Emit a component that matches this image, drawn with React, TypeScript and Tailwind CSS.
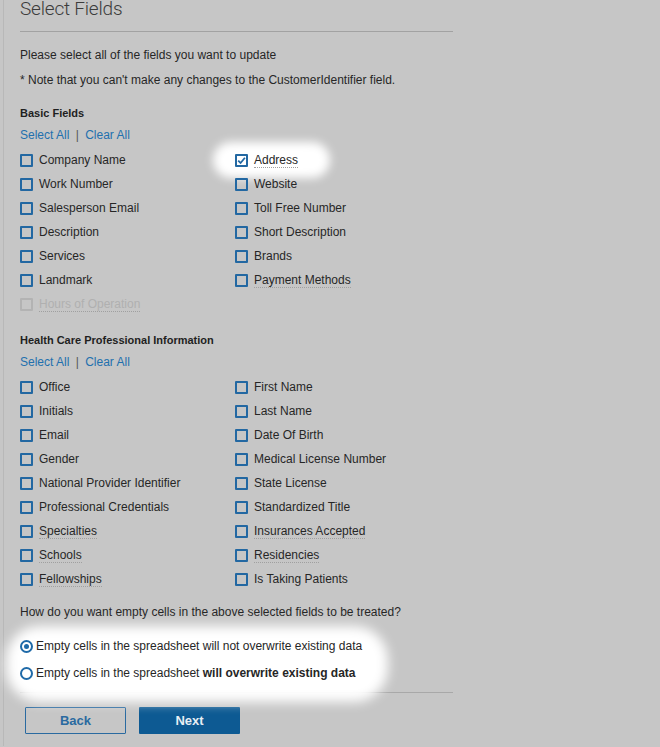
import React from 'react';

type Field = { label: string; checked?: boolean; disabled?: boolean; dotted?: boolean; glow?: boolean };

const basicFields: Field[] = [
  { label: 'Company Name' },
  { label: 'Address', checked: true, dotted: true, glow: true },
  { label: 'Work Number' },
  { label: 'Website' },
  { label: 'Salesperson Email' },
  { label: 'Toll Free Number' },
  { label: 'Description' },
  { label: 'Short Description' },
  { label: 'Services' },
  { label: 'Brands' },
  { label: 'Landmark' },
  { label: 'Payment Methods', dotted: true },
  { label: 'Hours of Operation', disabled: true, dotted: true },
];

const hcpFields: Field[] = [
  { label: 'Office' },
  { label: 'First Name' },
  { label: 'Initials' },
  { label: 'Last Name' },
  { label: 'Email' },
  { label: 'Date Of Birth' },
  { label: 'Gender' },
  { label: 'Medical License Number' },
  { label: 'National Provider Identifier' },
  { label: 'State License' },
  { label: 'Professional Credentials' },
  { label: 'Standardized Title' },
  { label: 'Specialties', dotted: true },
  { label: 'Insurances Accepted', dotted: true },
  { label: 'Schools', dotted: true },
  { label: 'Residencies', dotted: true },
  { label: 'Fellowships', dotted: true },
  { label: 'Is Taking Patients' },
];

const Checkbox: React.FC<{ checked?: boolean; disabled?: boolean }> = ({ checked, disabled }) => (
  <span
    className={`w-[13px] h-[13px] shrink-0 border-2 rounded-[1px] flex items-center justify-center ${
      disabled ? 'border-[#b3b3b3]' : 'border-[#2368a2]'
    } ${checked ? 'bg-white' : ''}`}
  >
    {checked && (
      <svg width="9" height="9" viewBox="0 0 9 9">
        <path d="M1.2 4.6 L3.6 7 L7.9 1.8" stroke="#2368a2" strokeWidth="1.8" fill="none" />
      </svg>
    )}
  </span>
);

const FieldItem: React.FC<{ field: Field }> = ({ field }) => (
  <div className="relative h-[24px] flex items-center">
    {field.glow && (
      <div className="absolute left-[-22px] top-[-6px] w-[117px] h-[36px] rounded-full bg-white blur-[5px]" />
    )}
    <div className="relative flex items-center gap-[6px]">
      <Checkbox checked={field.checked} disabled={field.disabled} />
      <span
        className={`${field.disabled ? 'text-[#b0b0b0]' : 'text-[#262626]'} ${
          field.dotted ? 'border-b border-dotted border-[#a0a0a0] leading-[14px]' : ''
        }`}
      >
        {field.label}
      </span>
    </div>
  </div>
);

const Section: React.FC<{ title: string; fields: Field[] }> = ({ title, fields }) => (
  <div>
    <div className="font-bold text-[#1f1f1f] text-[11px] leading-[16px]">{title}</div>
    <div className="mt-[6px] leading-[16px] text-[#2270ae]">
      Select All <span className="text-[#555] mx-[3px]">|</span> Clear All
    </div>
    <div className="mt-[5px] grid grid-cols-[215px_1fr]">
      {fields.map((f) => (
        <FieldItem key={f.label} field={f} />
      ))}
    </div>
  </div>
);

const Radio: React.FC<{ checked?: boolean }> = ({ checked }) => (
  <span className="w-[13px] h-[13px] shrink-0 rounded-full border-2 border-[#1f6aa8] flex items-center justify-center bg-white">
    {checked && <span className="w-[5px] h-[5px] rounded-full bg-[#1f6aa8]" />}
  </span>
);

export default function App() {
  return (
    <div
      className="w-[660px] h-[747px] overflow-hidden bg-[#c6c6c6] text-[12px] text-[#262626]"
      style={{ fontFamily: '"Liberation Sans", Arial, sans-serif' }}
    >
      <div className="ml-[3px] h-full border-l border-[#b8b8b8] pl-[16px] w-[450px]">
        <div
          className="mt-[-1px] h-[20px] text-[19px] leading-[20px] text-[#3c3c3c] font-light tracking-[-0.2px]"
          style={{ fontFamily: 'Roboto, "Liberation Sans", sans-serif' }}
        >
          Select Fields
        </div>
        <div className="mt-[12px] h-px bg-[#a2a2a2]" />

        <div className="mt-[15px] leading-[16px]">Please select all of the fields you want to update</div>
        <div className="mt-[9px] leading-[16px]">
          * Note that you can't make any changes to the CustomerIdentifier field.
        </div>

        <div className="mt-[17px]">
          <Section title="Basic Fields" fields={basicFields} />
        </div>

        <div className="mt-[16px]">
          <Section title="Health Care Professional Information" fields={hcpFields} />
        </div>

        <div className="mt-[13px] leading-[16px]">
          How do you want empty cells in the above selected fields to be treated?
        </div>

        <div className="relative mt-[16px]">
          <div className="absolute left-[-14px] top-[-10px] w-[382px] h-[76px] rounded-[34px] bg-white blur-[6px]" />
          <div className="relative">
            <div className="h-[20px] flex items-center gap-[3px]">
              <Radio checked />
              <span>Empty cells in the spreadsheet will not overwrite existing data</span>
            </div>
            <div className="mt-[7px] h-[20px] flex items-center gap-[3px]">
              <Radio />
              <span>
                Empty cells in the spreadsheet <b>will overwrite existing data</b>
              </span>
            </div>
          </div>
        </div>

        <div className="mt-[9px] h-px bg-[#a8a8a8]" />

        <div className="mt-[14px] ml-[5px] flex gap-[13px]">
          <button className="w-[101px] h-[27px] border border-[#2a6aa0] rounded-[1px] text-[#2a6aa0] font-bold text-[13px]">
            Back
          </button>
          <button className="w-[101px] h-[27px] bg-[#0d5a93] rounded-[1px] text-[#e8eef4] font-bold text-[13px]">
            Next
          </button>
        </div>
      </div>
    </div>
  );
}
